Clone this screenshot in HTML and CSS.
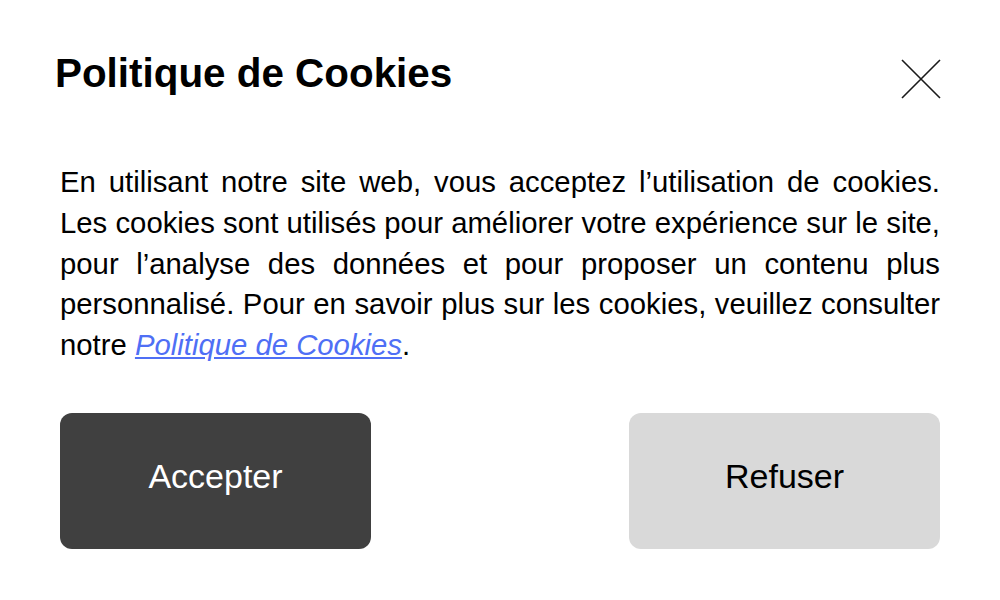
FILE: index.html
```html
<!DOCTYPE html>
<html lang="fr">
<head>
<meta charset="utf-8">
<title>Politique de Cookies</title>
<link rel="stylesheet" href="styles.css">
</head>
<body>
<div class="dialog">
  <div class="header">
    <h1 class="title">Politique de Cookies</h1>
    <button class="close" aria-label="Fermer">
      <svg width="40" height="40" viewBox="0 0 40 40"><path d="M1 1 L39 39 M39 1 L1 39" stroke="#1a1a1a" stroke-width="1.6" fill="none"/></svg>
    </button>
  </div>
  <p class="text">En utilisant notre site web, vous acceptez l’utilisation de cookies. Les cookies sont utilisés pour améliorer votre expérience sur le site, pour l’analyse des données et pour proposer un contenu plus personnalisé. Pour en savoir plus sur les cookies, veuillez consulter notre <a class="link" href="#">Politique de Cookies</a>.</p>
  <div class="actions">
    <button class="btn btn-accept">Accepter</button>
    <button class="btn btn-refuse">Refuser</button>
  </div>
</div>
</body>
</html>
```
FILE: styles.css
```css
html, body {
  margin: 0;
  padding: 0;
  background: #ffffff;
}
body {
  font-family: "Liberation Sans", Arial, sans-serif;
  color: #000;
}
.dialog {
  width: 1000px;
  height: 600px;
  box-sizing: border-box;
  padding: 0 60px;
}
.header {
  display: flex;
  justify-content: space-between;
  align-items: flex-start;
  height: 161px;
}
.title {
  margin: 50px 0 0 -5px;
  font-size: 40.4px;
  font-weight: bold;
  line-height: 46px;
}
.close {
  margin-top: 59px;
  margin-right: -1px;
  padding: 0;
  border: 0;
  background: none;
  width: 40px;
  height: 40px;
  cursor: pointer;
}
.close svg { display: block; }
.text {
  margin: 0;
  font-size: 29.3px;
  line-height: 40.8px;
  text-align: justify;
  padding-top: 1px;
}
.link {
  color: #4f6ff5;
  font-style: italic;
  text-decoration: underline;
}
.actions {
  display: flex;
  justify-content: space-between;
  margin-top: 47px;
}
.btn {
  width: 311px;
  height: 136px;
  padding: 0 0 8px;
  border: 0;
  border-radius: 12px;
  font-family: "Liberation Sans", Arial, sans-serif;
  font-size: 34px;
  cursor: pointer;
}
.btn-accept {
  background: #404040;
  color: #ffffff;
}
.btn-refuse {
  background: #d9d9d9;
  color: #000000;
}
```
